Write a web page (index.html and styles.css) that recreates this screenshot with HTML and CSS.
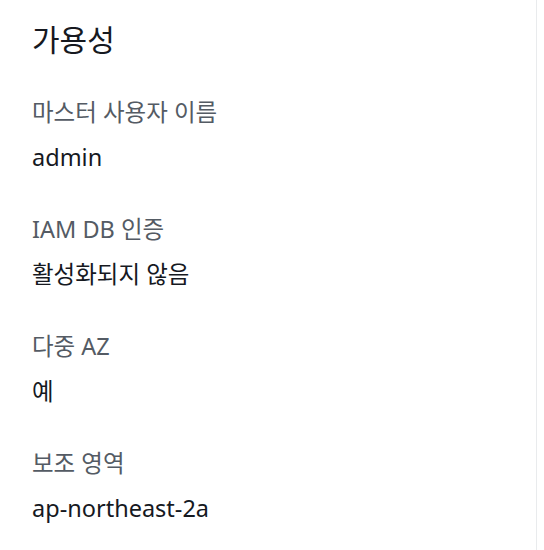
FILE: index.html
```html
<!DOCTYPE html>
<html lang="ko">
<head>
<meta charset="utf-8">
<link rel="stylesheet" href="styles.css">
</head>
<body>
<div class="panel">
  <h2 class="title">가용성</h2>
  <dl class="list">
    <div class="item">
      <dt class="label">마스터 사용자 이름</dt>
      <dd class="value">admin</dd>
    </div>
    <div class="item">
      <dt class="label">IAM DB 인증</dt>
      <dd class="value">활성화되지 않음</dd>
    </div>
    <div class="item">
      <dt class="label">다중 AZ</dt>
      <dd class="value">예</dd>
    </div>
    <div class="item">
      <dt class="label">보조 영역</dt>
      <dd class="value">ap-northeast-2a</dd>
    </div>
  </dl>
</div>
</body>
</html>
```
FILE: styles.css
```css
html, body {
  margin: 0;
  padding: 0;
  background: #ffffff;
}
body {
  font-family: "Noto Sans", "Noto Sans CJK KR", sans-serif;
  width: 544px;
  height: 550px;
  overflow: hidden;
}
.panel {
  box-sizing: border-box;
  width: 537px;
  height: 550px;
  border-right: 1px solid #e9ebed;
  padding: 22px 0 0 32px;
}
.title {
  margin: 0;
  font-size: 30px;
  font-weight: 400;
  line-height: 36px;
  color: #16191f;
}
.list {
  margin: 39px 0 0 0;
  display: flex;
  flex-direction: column;
  gap: 42px;
}
.item {
  display: flex;
  flex-direction: column;
  gap: 15px;
}
.label {
  font-size: 23.5px;
  line-height: 30px;
  color: #545b64;
}
.value {
  margin: 0;
  font-size: 23.5px;
  line-height: 30px;
  color: #16191f;
}
```
